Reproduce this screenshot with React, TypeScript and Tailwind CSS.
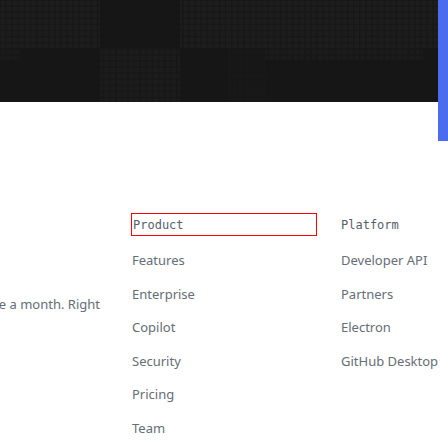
import React from 'react';

const productLinks = ['Features', 'Enterprise', 'Copilot', 'Security', 'Pricing', 'Team'];
const platformLinks = ['Developer API', 'Partners', 'Electron', 'GitHub Desktop'];

// dotted grid blocks drawn over the dark hero band
const blocks = [
    {x: 0, y: 0, w: 100, h: 48, o: 1},
    {x: 0, y: 48, w: 20, h: 12, o: 0.6},
    {x: 100, y: 48, w: 80, h: 54, o: 0.8},
    {x: 180, y: 0, w: 85, h: 48, o: 1},
    {x: 228, y: 48, w: 37, h: 54, o: 0.3},
    {x: 265, y: 0, w: 173, h: 48, o: 1},
    {x: 265, y: 48, w: 158, h: 12, o: 0.7},
];

const Hero = () => {
    return (
        <div className="flex-1 h-[102px] bg-[#161616]">
            <svg width="438" height="102" className="block">
                <defs>
                    <pattern id="dots" width="6.1" height="6.1" patternUnits="userSpaceOnUse">
                        <rect x="0.6" y="0.6" width="4.8" height="4.8" fill="#1d1d1d" />
                    </pattern>
                </defs>
                {blocks.map((b, i) => (
                    <rect key={i} x={b.x} y={b.y} width={b.w} height={b.h} fill="url(#dots)" opacity={b.o} />
                ))}
            </svg>
        </div>
    );
};

const App = () => {
    return (
        <div className="w-[448px] h-[448px] overflow-hidden bg-white" style={{fontFamily: '"Noto Sans", "Open Sans", sans-serif'}}>
            <div className="flex items-start">
                <Hero />
                <div className="w-[10px] h-[141px] bg-[#4a6cee]" />
            </div>

            <div className="flex mt-[72px]">
                {/* newsletter blurb, spills off the left edge */}
                <div className="w-[131px] flex justify-end overflow-hidden pr-[31px] pt-[82px]">
                    <p className="whitespace-nowrap text-[13px] text-[#656d76]">Subscribe to our developer newsletter twice a month. Right</p>
                </div>

                <div className="w-[186px] flex flex-col">
                    <div className="h-[23px] border border-[#ff0000] flex items-center px-[1px]">
                        <span className="text-[12px] text-[#57606a]" style={{fontFamily: '"DejaVu Sans Mono", monospace'}}>Product</span>
                    </div>
                    <ul className="flex flex-col gap-[14.6px] mt-[15px]">
                        {productLinks.map((item) => (
                            <li key={item} className="text-[13px] leading-[19px] text-[#656d76] pl-[1px]">{item}</li>
                        ))}
                    </ul>
                </div>

                <div className="ml-[24px] flex flex-col">
                    <div className="h-[23px] flex items-center">
                        <span className="text-[12px] text-[#57606a]" style={{fontFamily: '"DejaVu Sans Mono", monospace'}}>Platform</span>
                    </div>
                    <ul className="flex flex-col gap-[14.6px] mt-[15px]">
                        {platformLinks.map((item) => (
                            <li key={item} className="text-[13px] leading-[19px] text-[#656d76] whitespace-nowrap">{item}</li>
                        ))}
                    </ul>
                </div>
            </div>
        </div>
    );
};

export default App;
